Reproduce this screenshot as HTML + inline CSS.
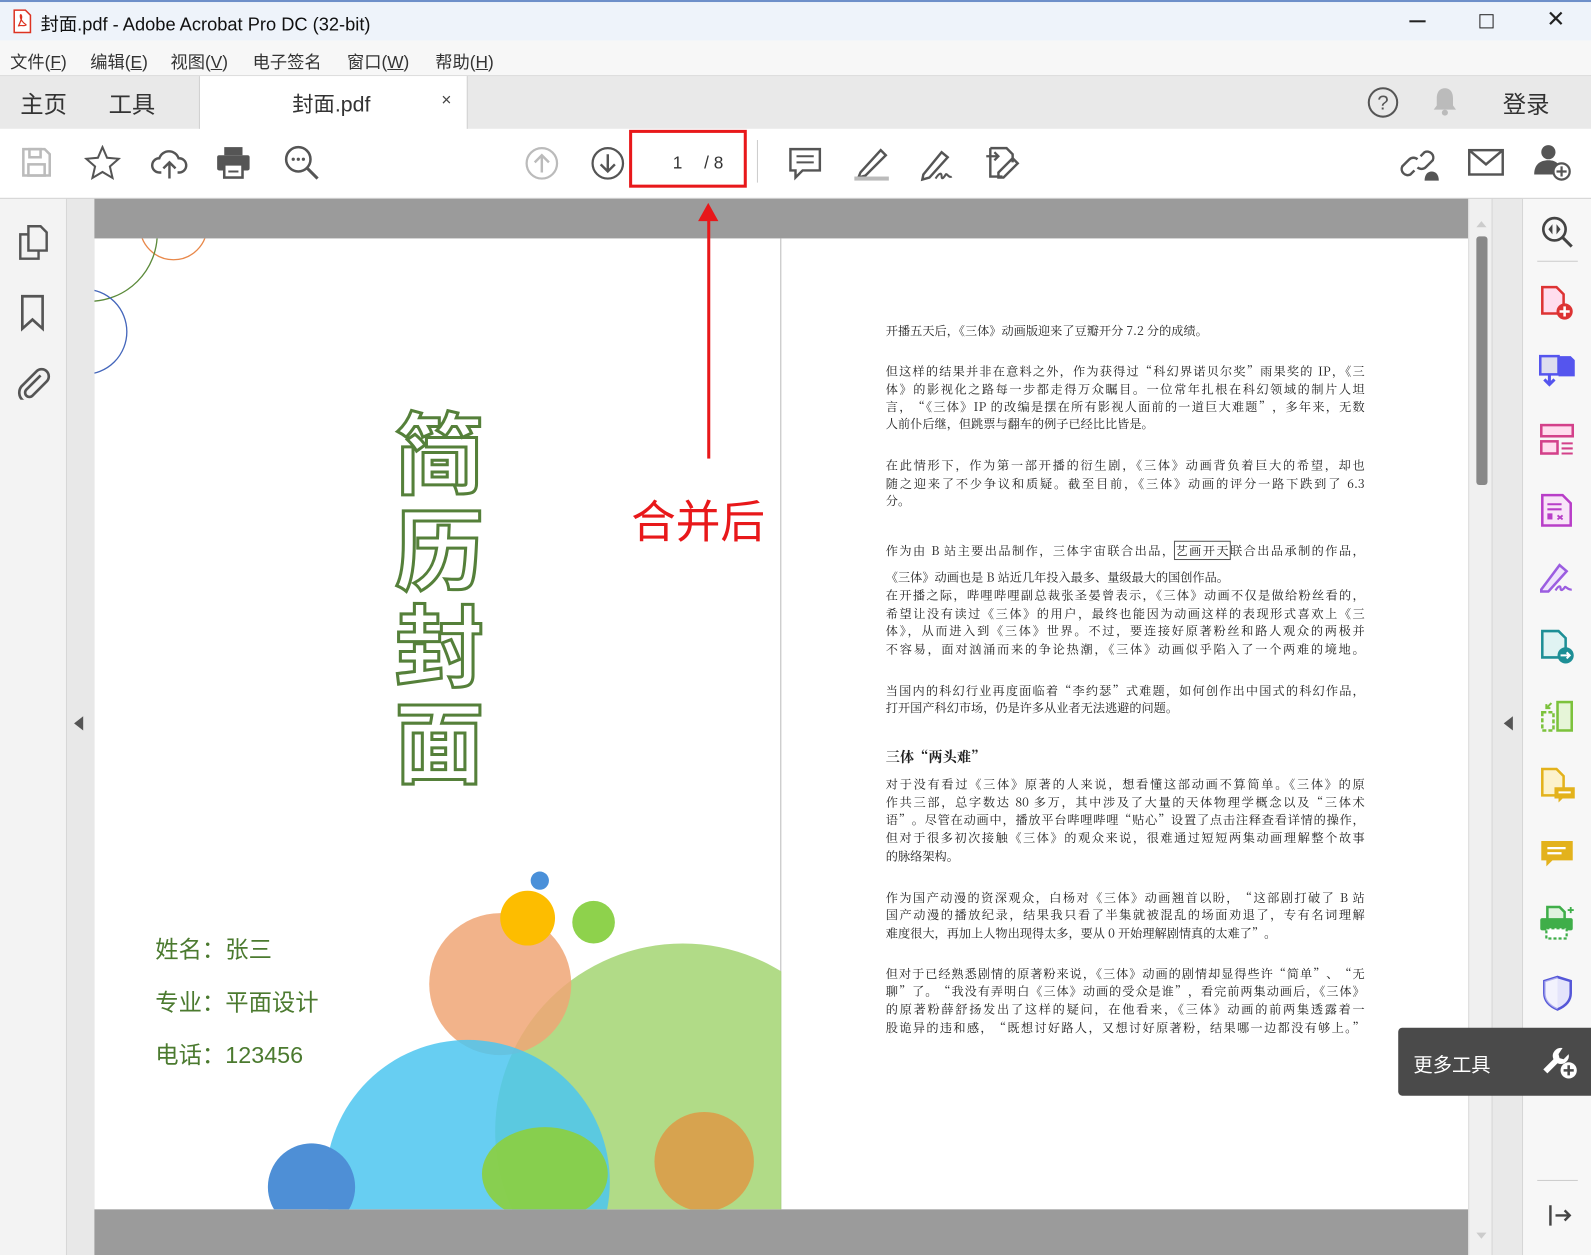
<!DOCTYPE html>
<html><head><meta charset="utf-8"><style>
*{margin:0;padding:0;box-sizing:border-box}
html,body{width:1591px;height:1255px;overflow:hidden;background:#fff}
#w{position:absolute;left:0;top:0;width:1568px;height:1237px;overflow:hidden;transform:scale(1.01467,1.01455);transform-origin:0 0;font-family:"Liberation Sans","Noto Sans CJK SC",sans-serif;color:#222}
.a{position:absolute}
.l{position:absolute;left:780px;width:472px;white-space:nowrap;font-family:"Noto Serif CJK SC",serif;font-size:12px;line-height:18px;color:#222;text-align:justify;text-align-last:justify}
.n{text-align-last:left}
.ic{position:absolute}
.m{position:absolute;top:47px;font-size:17px;color:#333}
</style></head><body><div id="w">
<div class="a" style="left:0;top:0;width:1568px;height:40px;background:#eef3fa;border-top:2px solid #6e8fc9"></div>
<svg class="ic" style="left:12px;top:9px" width="20" height="24" viewBox="0 0 20 24"><path d="M2 1h11l5 5v17H2z" fill="#fff" stroke="#d32" stroke-width="1.5"/><path d="M6 17c3-6 4-9 3-11s-2 2 1 6 5 3 3 4-6-1-7 1z" fill="none" stroke="#d32" stroke-width="1.2"/></svg>
<div class="a" style="left:40px;top:10px;font-size:18px;color:#111">封面.pdf - Adobe Acrobat Pro DC (32-bit)</div>
<div class="a" style="left:1389px;top:20px;width:16px;height:1.5px;background:#222"></div>
<div class="a" style="left:1458px;top:14px;width:14px;height:14px;border:1.5px solid #222"></div>
<div class="a" style="left:1524px;top:6px;font-size:22px;color:#222">✕</div>
<div class="a" style="left:0;top:40px;width:1568px;height:34px;background:#f7f7f7"></div>
<div class="m" style="left:10px">文件(<u>F</u>)</div>
<div class="m" style="left:89px">编辑(<u>E</u>)</div>
<div class="m" style="left:168px">视图(<u>V</u>)</div>
<div class="m" style="left:249px">电子签名</div>
<div class="m" style="left:342px">窗口(<u>W</u>)</div>
<div class="m" style="left:429px">帮助(<u>H</u>)</div>
<div class="a" style="left:0;top:74px;width:1568px;height:53px;background:#e9e9e9;border-top:1px solid #ddd"></div>
<div class="a" style="left:20px;top:84px;font-size:23px;color:#333">主页</div>
<div class="a" style="left:107px;top:84px;font-size:23px;color:#333">工具</div>
<div class="a" style="left:196px;top:75px;width:265px;height:53px;background:#fff;border-left:1px solid #ccc;border-right:1px solid #ccc"></div>
<div class="a" style="left:288px;top:87px;font-size:21px;color:#333">封面.pdf</div>
<div class="a" style="left:435px;top:89px;font-size:17px;color:#444">×</div>
<svg class="ic" style="left:1346px;top:84px" width="34" height="34"><circle cx="17" cy="17" r="14" fill="none" stroke="#555" stroke-width="2"/><text x="17" y="24" font-size="20" text-anchor="middle" fill="#555" font-family="Liberation Sans">?</text></svg>
<svg class="ic" style="left:1409px;top:84px" width="30" height="32"><path d="M15 3c-6 0-8 5-8 10v7l-3 4h22l-3-4v-7c0-5-2-10-8-10z" fill="#bbb"/><circle cx="15" cy="27" r="3" fill="#bbb"/></svg>
<div class="a" style="left:1481px;top:84px;font-size:23px;color:#333">登录</div>
<div class="a" style="left:0;top:127px;width:1568px;height:69px;background:#fff;border-bottom:1px solid #ccc"></div>
<svg class="ic" style="left:20px;top:144px" width="32" height="32"><path d="M3 3h21l5 5v21H3z" fill="none" stroke="#bbb" stroke-width="2.5"/><rect x="9" y="3" width="11" height="8" fill="none" stroke="#bbb" stroke-width="2.5"/><rect x="8" y="18" width="16" height="11" fill="none" stroke="#bbb" stroke-width="2.5"/></svg>
<svg class="ic" style="left:83px;top:143px" width="36" height="36"><path d="M18 2l4.5 10.5 11.5 1-8.7 7.6 2.6 11.3L18 26.5 8.1 32.4l2.6-11.3L2 13.5l11.5-1z" fill="none" stroke="#555" stroke-width="2"/></svg>
<svg class="ic" style="left:148px;top:143px" width="38" height="36"><path d="M11 27H9a7 7 0 0 1 0-14 10 10 0 0 1 19 0 7 7 0 0 1 1 14h-2" fill="none" stroke="#555" stroke-width="2.4"/><path d="M19 33V17m-6 6l6-6 6 6" fill="none" stroke="#555" stroke-width="2.4"/></svg>
<svg class="ic" style="left:212px;top:142px" width="36" height="36"><rect x="9" y="3" width="18" height="8" fill="#555"/><rect x="2" y="11" width="32" height="15" rx="2" fill="#555"/><rect x="9" y="20" width="18" height="13" fill="#fff" stroke="#555" stroke-width="2.5"/><path d="M13 27h10" stroke="#555" stroke-width="2"/></svg>
<svg class="ic" style="left:279px;top:142px" width="38" height="38"><circle cx="15" cy="15" r="12" fill="none" stroke="#555" stroke-width="2.5"/><path d="M24 24l10 10" stroke="#555" stroke-width="3"/><circle cx="10" cy="15" r="1.6" fill="#555"/><circle cx="15" cy="15" r="1.6" fill="#555"/><circle cx="20" cy="15" r="1.6" fill="#555"/></svg>
<svg class="ic" style="left:516px;top:143px" width="36" height="36"><circle cx="18" cy="18" r="15" fill="none" stroke="#bbb" stroke-width="2.2"/><path d="M18 27V10m-7 7l7-7 7 7" fill="none" stroke="#bbb" stroke-width="2.4"/></svg>
<svg class="ic" style="left:581px;top:143px" width="36" height="36"><circle cx="18" cy="18" r="15" fill="none" stroke="#555" stroke-width="2.2"/><path d="M18 9v17m-7-7l7 7 7-7" fill="none" stroke="#555" stroke-width="2.4"/></svg>
<div class="a" style="left:620px;top:128px;width:116px;height:57px;border:3px solid #e8181a"></div>
<div class="a" style="left:663px;top:151px;font-size:17px;color:#333">1</div>
<div class="a" style="left:694px;top:151px;font-size:17px;color:#333">/ 8</div>
<div class="a" style="left:746px;top:138px;width:1px;height:42px;background:#ccc"></div>
<svg class="ic" style="left:776px;top:143px" width="36" height="36"><path d="M3 4h29v21H15l-7 7v-7H3z" fill="none" stroke="#555" stroke-width="2.4"/><path d="M9 11h17M9 17h17" stroke="#555" stroke-width="2"/></svg>
<svg class="ic" style="left:840px;top:142px" width="38" height="38"><path d="M8 28L28 6l5 5-20 20-7 2z" fill="none" stroke="#555" stroke-width="2.4"/><rect x="2" y="32" width="34" height="4" fill="#bbb"/></svg>
<svg class="ic" style="left:904px;top:142px" width="40" height="38"><path d="M6 30L24 8l6 5-18 20-7 2z" fill="none" stroke="#555" stroke-width="2.4"/><path d="M18 34c4-6 6-6 6-2s3 0 4-2 3 4 6 2" fill="none" stroke="#555" stroke-width="2"/></svg>
<svg class="ic" style="left:968px;top:140px" width="40" height="40"><path d="M8 6h16l6 6v8M8 6v28h12" fill="none" stroke="#555" stroke-width="2.4"/><path d="M16 30l14-14 5 5-14 14h-5z" fill="none" stroke="#555" stroke-width="2.4"/><path d="M4 14h12m-4-4l4 4-4 4" fill="none" stroke="#555" stroke-width="2.2"/></svg>
<svg class="ic" style="left:1380px;top:142px" width="40" height="38"><path d="M14 26l-4 4a6 6 0 0 1-8-8l7-7a6 6 0 0 1 8 0M20 12l4-4a6 6 0 0 1 8 8l-7 7a6 6 0 0 1-8 0" fill="none" stroke="#555" stroke-width="2.4"/><path d="M24 36h14c0-6-3-9-7-9s-7 3-7 9z" fill="#555"/></svg>
<svg class="ic" style="left:1446px;top:146px" width="38" height="30"><rect x="2" y="2" width="33" height="24" fill="none" stroke="#555" stroke-width="2.4"/><path d="M2 2l16.5 14L35 2" fill="none" stroke="#555" stroke-width="2.4"/></svg>
<svg class="ic" style="left:1510px;top:140px" width="40" height="40"><circle cx="16" cy="10" r="7" fill="#555"/><path d="M2 32c0-10 6-14 14-14 4 0 7 1 9 3v11z" fill="#555"/><circle cx="29" cy="29" r="8" fill="#fff" stroke="#555" stroke-width="2.2"/><path d="M29 24v10M24 29h10" stroke="#555" stroke-width="2.2"/></svg>
<div class="a" style="left:0;top:196px;width:66px;height:1041px;background:#f3f3f3;border-right:1px solid #d6d6d6"></div>
<svg class="ic" style="left:16px;top:221px" width="34" height="38"><path d="M12 2h12l6 6v18H12z" fill="none" stroke="#555" stroke-width="2.4"/><path d="M12 10H4v24h18v-8" fill="none" stroke="#555" stroke-width="2.4"/></svg>
<svg class="ic" style="left:18px;top:290px" width="28" height="38"><path d="M4 2h20v32l-10-9-10 9z" fill="none" stroke="#555" stroke-width="2.6"/></svg>
<svg class="ic" style="left:14px;top:358px" width="36" height="36"><path d="M26 12L12 26a4 4 0 0 0 6 6l14-14a7 7 0 0 0-10-10L7 23a10 10 0 0 0 14 14" fill="none" stroke="#555" stroke-width="2.6"/></svg>
<div class="a" style="left:66px;top:196px;width:27px;height:1041px;background:#e8e8e8"></div>
<div class="a" style="left:73px;top:706px;width:0;height:0;border-top:7px solid transparent;border-bottom:7px solid transparent;border-right:9px solid #555"></div>
<div class="a" style="left:93px;top:196px;width:1354px;height:1041px;background:#9b9b9b"></div>
<div class="a" style="left:93px;top:235px;width:1354px;height:957px;background:#fff;overflow:hidden">
 <div class="a" style="left:676px;top:0;width:1px;height:957px;background:#bbb"></div>
 <svg class="a" style="left:0;top:0" width="677" height="957">
  <circle cx="78" cy="-12" r="33" fill="none" stroke="#e8884a" stroke-width="1.3"/>
  <circle cx="-5" cy="-5" r="67" fill="none" stroke="#5b8a3a" stroke-width="1.3"/>
  <circle cx="-10" cy="92" r="42" fill="none" stroke="#4466bb" stroke-width="1.3"/>
  <circle cx="580" cy="880" r="185" fill="#a8d77a" opacity=".9"/>
  <circle cx="400" cy="735" r="70" fill="#f0a676" opacity=".85"/>
  <circle cx="368" cy="930" r="140" fill="#4cc5f0" opacity=".85"/>
  <ellipse cx="444" cy="922" rx="62" ry="46" fill="#8ccf3e" opacity=".9"/>
  <circle cx="601" cy="910" r="49" fill="#d9a04c" opacity=".95"/>
  <circle cx="214" cy="935" r="43" fill="#4e8fd6"/>
  <circle cx="427" cy="670" r="27" fill="#fdbd00"/>
  <circle cx="492" cy="674" r="21" fill="#8ed24c"/>
  <circle cx="439" cy="633" r="9" fill="#4a90d9"/>
 </svg>
 <div class="a" style="left:290px;top:160px;width:100px;font-size:88px;line-height:95px;font-weight:bold;color:#fff;-webkit-text-stroke:3px #55803a;font-family:'Noto Sans CJK SC',sans-serif;text-align:center">简<br>历<br>封<br>面</div>
 <div class="a" style="left:60px;top:675px;font-size:23px;line-height:52px;color:#4b7a2f;font-family:'Liberation Sans','Noto Sans CJK SC',sans-serif">姓名：张三<br>专业：平面设计<br>电话：123456</div>
 <div class="a" style="left:529px;top:244px;font-size:44px;color:#e8181a;font-family:'Noto Sans CJK SC',sans-serif">合并后</div>
</div>
<div class="a" style="left:93px;top:0;width:0;height:0"></div>
<div style="position:absolute;left:93px;top:0">
<div class="l n" style="top:317px">开播五天后，《三体》动画版迎来了豆瓣开分 7.2 分的成绩。</div>
<div class="l" style="top:357px">但这样的结果并非在意料之外，作为获得过“科幻界诺贝尔奖”雨果奖的 IP，《三</div>
<div class="l" style="top:375px">体》的影视化之路每一步都走得万众瞩目。一位常年扎根在科幻领域的制片人坦</div>
<div class="l" style="top:392px">言，“《三体》IP 的改编是摆在所有影视人面前的一道巨大难题”，多年来，无数</div>
<div class="l n" style="top:409px">人前仆后继，但跳票与翻车的例子已经比比皆是。</div>
<div class="l" style="top:450px">在此情形下，作为第一部开播的衍生剧，《三体》动画背负着巨大的希望，却也</div>
<div class="l" style="top:468px">随之迎来了不少争议和质疑。截至目前，《三体》动画的评分一路下跌到了 6.3</div>
<div class="l n" style="top:485px">分。</div>
<div class="l" style="top:534px">作为由 B 站主要出品制作，三体宇宙联合出品，<span style="outline:1px solid #555">艺画开天</span>联合出品承制的作品，</div>
<div class="l n" style="top:560px">《三体》动画也是 B 站近几年投入最多、量级最大的国创作品。</div>
<div class="l" style="top:578px">在开播之际，哔哩哔哩副总裁张圣晏曾表示，《三体》动画不仅是做给粉丝看的，</div>
<div class="l" style="top:596px">希望让没有读过《三体》的用户，最终也能因为动画这样的表现形式喜欢上《三</div>
<div class="l" style="top:613px">体》，从而进入到《三体》世界。不过，要连接好原著粉丝和路人观众的两极并</div>
<div class="l" style="top:631px">不容易，面对汹涌而来的争论热潮，《三体》动画似乎陷入了一个两难的境地。</div>
<div class="l" style="top:672px">当国内的科幻行业再度面临着“李约瑟”式难题，如何创作出中国式的科幻作品，</div>
<div class="l n" style="top:689px">打开国产科幻市场，仍是许多从业者无法逃避的问题。</div>
<div class="l n" style="top:737px;font-size:14px;font-weight:bold">三体“两头难”</div>
<div class="l" style="top:764px">对于没有看过《三体》原著的人来说，想看懂这部动画不算简单。《三体》的原</div>
<div class="l" style="top:782px">作共三部，总字数达 80 多万，其中涉及了大量的天体物理学概念以及“三体术</div>
<div class="l" style="top:799px">语”。尽管在动画中，播放平台哔哩哔哩“贴心”设置了点击注释查看详情的操作，</div>
<div class="l" style="top:817px">但对于很多初次接触《三体》的观众来说，很难通过短短两集动画理解整个故事</div>
<div class="l n" style="top:835px">的脉络架构。</div>
<div class="l" style="top:876px">作为国产动漫的资深观众，白杨对《三体》动画翘首以盼，“这部剧打破了 B 站</div>
<div class="l" style="top:893px">国产动漫的播放纪录，结果我只看了半集就被混乱的场面劝退了，专有名词理解</div>
<div class="l n" style="top:911px">难度很大，再加上人物出现得太多，要从 0 开始理解剧情真的太难了”。</div>
<div class="l" style="top:951px">但对于已经熟悉剧情的原著粉来说，《三体》动画的剧情却显得些许“简单”、“无</div>
<div class="l" style="top:968px">聊”了。“我没有弄明白《三体》动画的受众是谁”，看完前两集动画后，《三体》</div>
<div class="l" style="top:986px">的原著粉薛舒扬发出了这样的疑问，在他看来，《三体》动画的前两集透露着一</div>
<div class="l" style="top:1004px">股诡异的违和感，“既想讨好路人，又想讨好原著粉，结果哪一边都没有够上。”</div>
</div>
<div class="a" style="left:697px;top:212px;width:3px;height:240px;background:#e8181a"></div>
<div class="a" style="left:688px;top:200px;width:0;height:0;border-left:10px solid transparent;border-right:10px solid transparent;border-bottom:18px solid #e8181a"></div>
<div class="a" style="left:1447px;top:196px;width:23px;height:1041px;background:#f0f0f0;border-left:1px solid #ddd"></div>
<div class="a" style="left:1455px;top:218px;width:0;height:0;border-left:5px solid transparent;border-right:5px solid transparent;border-bottom:6px solid #ccc"></div>
<div class="a" style="left:1455px;top:233px;width:11px;height:245px;background:#888;border-radius:3px"></div>
<div class="a" style="left:1455px;top:1215px;width:0;height:0;border-left:5px solid transparent;border-right:5px solid transparent;border-top:6px solid #ccc"></div>
<div class="a" style="left:1470px;top:196px;width:30px;height:1041px;background:#e9e9e9;border-left:1px solid #d6d6d6"></div>
<div class="a" style="left:1482px;top:706px;width:0;height:0;border-top:7px solid transparent;border-bottom:7px solid transparent;border-right:9px solid #555"></div>
<div class="a" style="left:1500px;top:196px;width:68px;height:1041px;background:#f7f7f7;border-left:1px solid #d6d6d6"></div>
<svg class="ic" style="left:1517px;top:211px" width="36" height="36"><circle cx="15" cy="15" r="11" fill="none" stroke="#444" stroke-width="2.6"/><path d="M23 23l9 9" stroke="#444" stroke-width="3"/><path d="M13 10l-4 5 4 5zM17 10l4 5-4 5z" fill="#444"/></svg>
<div class="a" style="left:1515px;top:257px;width:40px;height:1px;background:#ccc"></div>
<svg class="ic" style="left:1518px;top:281px" width="36" height="36"><path d="M2 2h14l7 7v19H2z" fill="#fde" stroke="#d33" stroke-width="2.5"/><circle cx="24" cy="26" r="8" fill="#d33"/><path d="M24 21v10M19 26h10" stroke="#fff" stroke-width="2.5"/></svg>
<svg class="ic" style="left:1516px;top:347px" width="38" height="38"><path d="M2 4h18v18H2z" fill="#dde" stroke="#55e" stroke-width="2.5"/><path d="M20 4h12l4 4v16H20z" fill="#55e"/><path d="M11 22v10m-5-5l5 5 5-5" fill="none" stroke="#55e" stroke-width="3"/></svg>
<svg class="ic" style="left:1517px;top:416px" width="36" height="36"><rect x="2" y="3" width="31" height="11" fill="#fde" stroke="#d3418a" stroke-width="2.5"/><rect x="2" y="19" width="16" height="12" fill="#fde" stroke="#d3418a" stroke-width="2.5"/><path d="M22 21h11M22 26h11M22 31h11" stroke="#d3418a" stroke-width="2"/></svg>
<svg class="ic" style="left:1518px;top:486px" width="34" height="36"><path d="M2 2h20l8 8v22H2z" fill="#f8e4f8" stroke="#b83ec8" stroke-width="2.5"/><path d="M7 11h14M7 16h14" stroke="#b83ec8" stroke-width="2"/><rect x="7" y="20" width="5" height="6" fill="#b83ec8"/><path d="M17 22l5 4m0-4l-5 4" stroke="#b83ec8" stroke-width="1.8"/></svg>
<svg class="ic" style="left:1515px;top:551px" width="40" height="36"><path d="M4 30L22 6l7 6-18 20H4z" fill="#eee4fb" stroke="#9b5de0" stroke-width="2.5"/><path d="M18 31c3-5 5-5 5-2s3 1 4-1 3 3 7 2" fill="none" stroke="#9b5de0" stroke-width="2.2"/></svg>
<svg class="ic" style="left:1518px;top:620px" width="36" height="36"><path d="M2 2h16l7 7v19H2z" fill="#e0f3f3" stroke="#1d8f96" stroke-width="2.5"/><circle cx="25" cy="26" r="8" fill="#1d8f96"/><path d="M20 26h9m-3-3l3 3-3 3" fill="none" stroke="#fff" stroke-width="2"/></svg>
<svg class="ic" style="left:1517px;top:689px" width="36" height="36"><rect x="18" y="3" width="14" height="28" fill="#e6f5d8" stroke="#7cc23c" stroke-width="2.5"/><path d="M3 13h11v18H3z" fill="none" stroke="#7cc23c" stroke-width="2.5" stroke-dasharray="4 2"/><path d="M12 4l-5 5m0-4v4h4" fill="none" stroke="#7cc23c" stroke-width="2"/></svg>
<svg class="ic" style="left:1518px;top:756px" width="36" height="38"><path d="M2 2h14l7 7v19H2z" fill="#fcf2cc" stroke="#e3b21c" stroke-width="2.5"/><path d="M14 20h20v11H22l-4 4v-4h-4z" fill="#e3b21c"/><path d="M18 25h12" stroke="#fff" stroke-width="2"/></svg>
<svg class="ic" style="left:1517px;top:826px" width="36" height="36"><path d="M2 3h31v19H13l-6 6v-6H2z" fill="#e3b21c"/><path d="M8 10h18M8 15h14" stroke="#fff" stroke-width="2.2"/></svg>
<svg class="ic" style="left:1515px;top:891px" width="40" height="40"><path d="M10 3h12l5 5v8H10z" fill="#dff2df" stroke="#3fae49" stroke-width="2.5"/><rect x="3" y="14" width="32" height="12" rx="2" fill="#3fae49"/><rect x="9" y="24" width="20" height="10" fill="#fff" stroke="#3fae49" stroke-width="2.2" stroke-dasharray="3 2"/><path d="M33 3v6M30 6h6" stroke="#3fae49" stroke-width="1.8"/></svg>
<svg class="ic" style="left:1519px;top:960px" width="32" height="38"><path d="M16 3l13 4v12c0 8-6 13-13 16C9 32 3 27 3 19V7z" fill="#e4e4fb" stroke="#5557d8" stroke-width="2.5"/><path d="M16 3v32C9 32 3 27 3 19V7z" fill="#fff" opacity=".5"/></svg>
<div class="a" style="left:1378px;top:1013px;width:190px;height:67px;background:#4a4a4a;border-radius:4px 0 0 4px"></div>
<div class="a" style="left:1393px;top:1035px;font-size:19px;color:#fff">更多工具</div>
<svg class="ic" style="left:1518px;top:1027px" width="40" height="40"><path d="M22 6a8 8 0 0 0-9 11L3 27l4 4 10-10a8 8 0 0 0 11-9l-5 5-4-1-1-4z" fill="#fff"/><circle cx="28" cy="28" r="8" fill="#fff"/><path d="M28 23v10M23 28h10" stroke="#4a4a4a" stroke-width="2.5"/></svg>
<div class="a" style="left:1515px;top:1163px;width:40px;height:1px;background:#ccc"></div>
<svg class="ic" style="left:1524px;top:1185px" width="28" height="26"><path d="M4 3v20" stroke="#444" stroke-width="2.4"/><path d="M9 13h14m-5-5l5 5-5 5" fill="none" stroke="#444" stroke-width="2.4"/></svg>
</div></body></html>
